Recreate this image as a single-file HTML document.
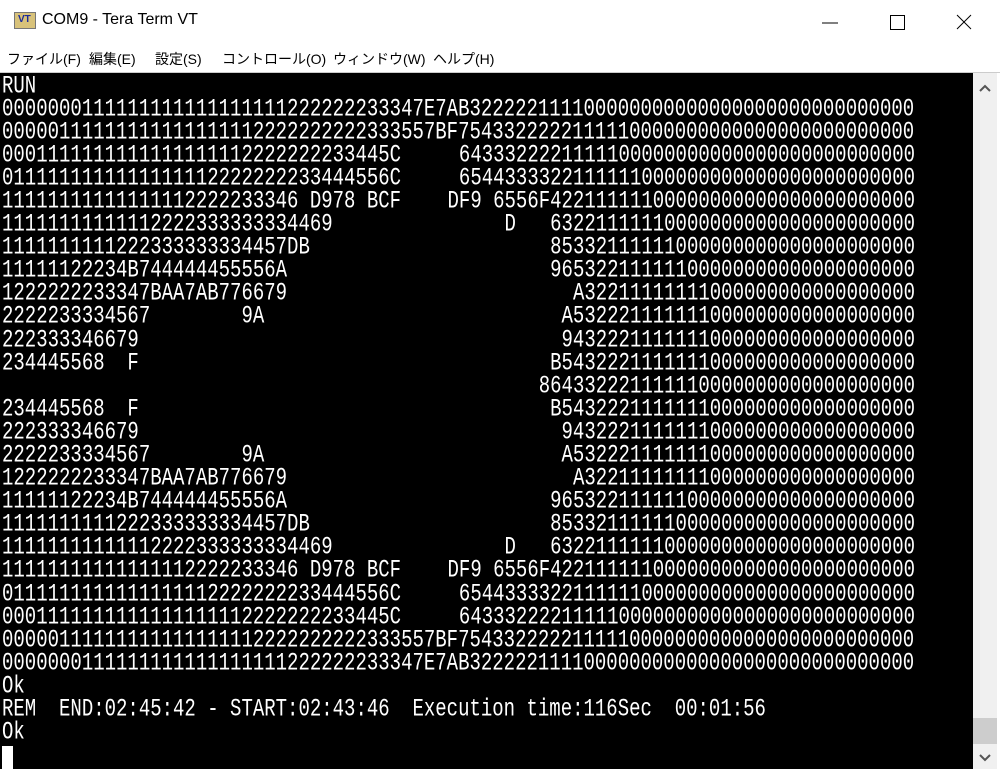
<!DOCTYPE html>
<html><head><meta charset="utf-8"><style>
body{margin:0;width:1000px;height:769px;overflow:hidden;background:#fff;position:relative;font-family:"Liberation Sans","Noto Sans CJK JP",sans-serif}
#title{position:absolute;left:0;top:0;width:1000px;height:44px;background:#fff}
#title .t{position:absolute;left:42px;top:11px;font-size:16px;color:#000}
#icon{position:absolute;left:14px;top:12px;width:22px;height:17px;background:#d8c27a;border:1px solid #777;box-sizing:border-box}
#icon span{position:absolute;left:3px;top:1px;font:bold 10px "Liberation Sans",sans-serif;color:#1a2a9a}
#menu{position:absolute;left:0;top:44px;height:28px;width:1000px;background:#fff;border-bottom:1px solid #ccc;font-size:14px}
#menu span{position:absolute;top:5px}
#term{position:absolute;left:0;top:73px;width:973px;height:696px;background:#000;overflow:hidden}
.l{position:absolute;left:2px;height:23px;line-height:23px;font:19px "Liberation Mono",monospace;color:#fff;white-space:pre;transform:scaleY(1.32);transform-origin:left center}
.r{position:absolute;right:58px;height:23px;line-height:23px;font:19px "Liberation Mono",monospace;color:#fff;white-space:pre;transform:scaleY(1.32);transform-origin:right center}
#sb{position:absolute;left:973px;top:73px;width:24px;height:696px;background:#f0f0f0}
#thumb{position:absolute;left:0;top:645px;width:24px;height:26px;background:#cdcdcd}
</style></head><body>
<div id="title"><div id="icon"><span>VT</span></div><div class="t">COM9 - Tera Term VT</div>
<svg style="position:absolute;left:810px;top:10px" width="180" height="26"><line x1="12" y1="13" x2="28" y2="13" stroke="#000" stroke-width="1"/><rect x="80.5" y="5.5" width="14" height="14" fill="none" stroke="#000"/><line x1="147" y1="5" x2="161" y2="19" stroke="#000"/><line x1="161" y1="5" x2="147" y2="19" stroke="#000"/></svg></div>
<div id="menu"><span style="left:7px">ファイル(F)</span><span style="left:89px">編集(E)</span><span style="left:155px">設定(S)</span><span style="left:222px">コントロール(O)</span><span style="left:333px">ウィンドウ(W)</span><span style="left:433px">ヘルプ(H)</span></div>
<div id="term">
<div class="l" style="top:2px">RUN</div>
<div class="l" style="top:25px">0000000111111111111111111222222233347E7AB322222111100000000000000000000000000000</div>
<div class="l" style="top:48px">00000111111111111111112222222222333557BF7543322222111110000000000000000000000000</div>
<div class="l" style="top:71px">0001111111111111111112222222233445C</div><div class="r" style="top:71px">6433322221111100000000000000000000000000</div>
<div class="l" style="top:94px">0111111111111111112222222233444556C</div><div class="r" style="top:94px">6544333322111111000000000000000000000000</div>
<div class="l" style="top:117px">11111111111111112222233346 D978 BCF</div><div class="r" style="top:117px">DF9 6556F42211111100000000000000000000000</div>
<div class="l" style="top:140px">11111111111112222333333334469</div><div class="r" style="top:140px">D   63221111110000000000000000000000</div>
<div class="l" style="top:163px">1111111111222333333334457DB</div><div class="r" style="top:163px">85332111111000000000000000000000</div>
<div class="l" style="top:186px">11111122234B744444455556A</div><div class="r" style="top:186px">96532211111100000000000000000000</div>
<div class="l" style="top:209px">1222222233347BAA7AB776679</div><div class="r" style="top:209px">A32211111111000000000000000000</div>
<div class="l" style="top:232px">2222233334567        9A</div><div class="r" style="top:232px">A532221111111000000000000000000</div>
<div class="l" style="top:256px">222333346679</div><div class="r" style="top:256px">9432221111111000000000000000000</div>
<div class="l" style="top:279px">234445568  F</div><div class="r" style="top:279px">B5432221111111000000000000000000</div>
<div class="r" style="top:302px">864332221111110000000000000000000</div>
<div class="l" style="top:325px">234445568  F</div><div class="r" style="top:325px">B5432221111111000000000000000000</div>
<div class="l" style="top:348px">222333346679</div><div class="r" style="top:348px">9432221111111000000000000000000</div>
<div class="l" style="top:371px">2222233334567        9A</div><div class="r" style="top:371px">A532221111111000000000000000000</div>
<div class="l" style="top:394px">1222222233347BAA7AB776679</div><div class="r" style="top:394px">A32211111111000000000000000000</div>
<div class="l" style="top:417px">11111122234B744444455556A</div><div class="r" style="top:417px">96532211111100000000000000000000</div>
<div class="l" style="top:440px">1111111111222333333334457DB</div><div class="r" style="top:440px">85332111111000000000000000000000</div>
<div class="l" style="top:463px">11111111111112222333333334469</div><div class="r" style="top:463px">D   63221111110000000000000000000000</div>
<div class="l" style="top:486px">11111111111111112222233346 D978 BCF</div><div class="r" style="top:486px">DF9 6556F42211111100000000000000000000000</div>
<div class="l" style="top:510px">0111111111111111112222222233444556C</div><div class="r" style="top:510px">6544333322111111000000000000000000000000</div>
<div class="l" style="top:533px">0001111111111111111112222222233445C</div><div class="r" style="top:533px">6433322221111100000000000000000000000000</div>
<div class="l" style="top:556px">00000111111111111111112222222222333557BF7543322222111110000000000000000000000000</div>
<div class="l" style="top:579px">0000000111111111111111111222222233347E7AB322222111100000000000000000000000000000</div>
<div class="l" style="top:602px">Ok</div>
<div class="l" style="top:625px">REM  END:02:45:42 - START:02:43:46  Execution time:116Sec  00:01:56</div>
<div class="l" style="top:648px">Ok</div>
<div style="position:absolute;left:2px;top:673px;width:11px;height:23px;background:#fff"></div>
</div>
<div id="sb"><svg width="24" height="24" style="position:absolute;top:4px"><polyline points="7,14 12,9 17,14" fill="none" stroke="#555" stroke-width="2"/></svg><div id="thumb"></div><svg width="24" height="24" style="position:absolute;top:672px"><polyline points="7,10 12,15 17,10" fill="none" stroke="#555" stroke-width="2"/></svg></div>
</body></html>
